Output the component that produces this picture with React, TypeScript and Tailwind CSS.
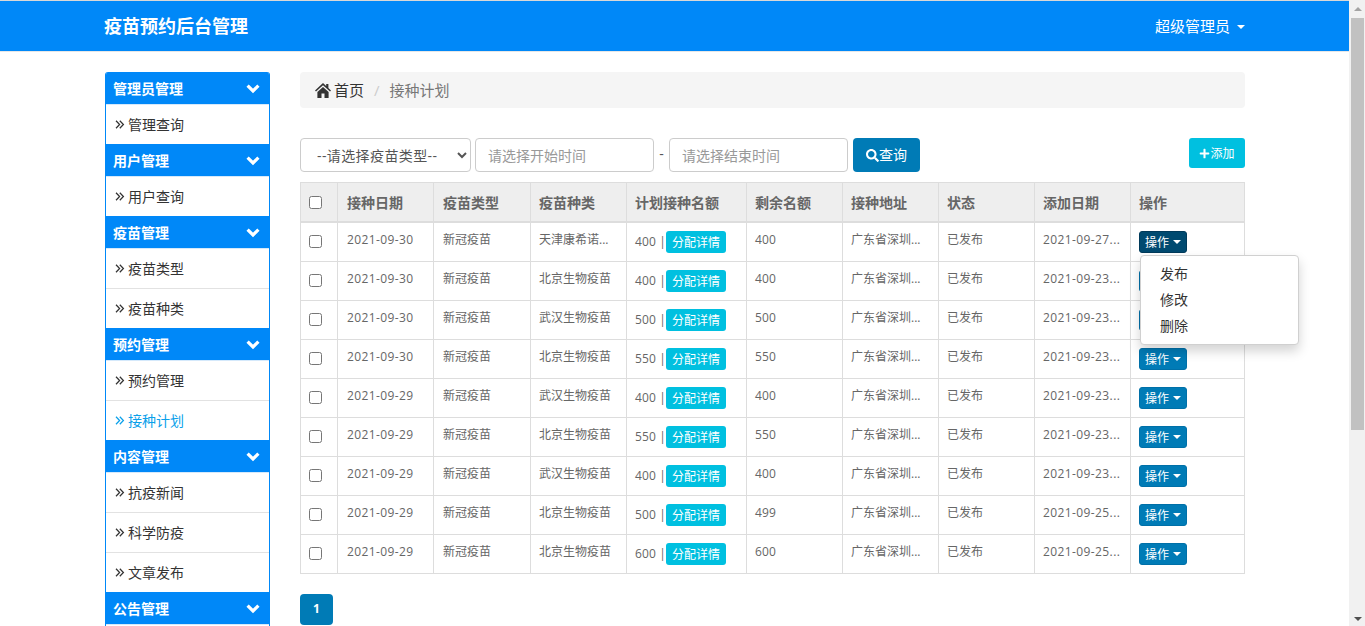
import React from "react";
import { FaSearch, FaPlus } from "react-icons/fa";

const menu = [
  { title: "管理员管理", items: ["管理查询"] },
  { title: "用户管理", items: ["用户查询"] },
  { title: "疫苗管理", items: ["疫苗类型", "疫苗种类"] },
  { title: "预约管理", items: ["预约管理", "接种计划"] },
  { title: "内容管理", items: ["抗疫新闻", "科学防疫", "文章发布"] },
  { title: "公告管理", items: [""] },
];

const rows = [
  ["2021-09-30", "天津康希诺...", "400", "400", "2021-09-27..."],
  ["2021-09-30", "北京生物疫苗", "400", "400", "2021-09-23..."],
  ["2021-09-30", "武汉生物疫苗", "500", "500", "2021-09-23..."],
  ["2021-09-30", "北京生物疫苗", "550", "550", "2021-09-23..."],
  ["2021-09-29", "武汉生物疫苗", "400", "400", "2021-09-23..."],
  ["2021-09-29", "北京生物疫苗", "550", "550", "2021-09-23..."],
  ["2021-09-29", "武汉生物疫苗", "400", "400", "2021-09-23..."],
  ["2021-09-29", "北京生物疫苗", "500", "499", "2021-09-25..."],
  ["2021-09-29", "北京生物疫苗", "600", "600", "2021-09-25..."],
];

const headers = ["接种日期", "疫苗类型", "疫苗种类", "计划接种名额", "剩余名额", "接种地址", "状态", "添加日期", "操作"];

function Caret() {
  return <span className="inline-block w-0 h-0 border-t-[4px] border-x-[4px] border-t-white border-x-transparent" />;
}

function Chevron() {
  return (
    <svg width="14" height="10" viewBox="0 0 14 10" className="shrink-0">
      <path d="M1.6 1.6 L7 7 L12.4 1.6" fill="none" stroke="white" strokeWidth="3.2" />
    </svg>
  );
}

function DoubleAngle() {
  return (
    <svg width="10" height="9" viewBox="0 0 10 9" className="mr-[3px] shrink-0">
      <path d="M1 .8 L4.6 4.5 L1 8.2 M4.8 .8 L8.4 4.5 L4.8 8.2" fill="none" stroke="currentColor" strokeWidth="1.25" />
    </svg>
  );
}

function Home() {
  return (
    <svg width="16" height="15" viewBox="0 0 16 15" className="mr-[3px] shrink-0" fill="#333">
      <path d="M8 0 L0 7.4 L1 8.6 L8 2.3 L15 8.6 L16 7.4 L13.4 5 V1 H11.2 V3 Z" />
      <path d="M2.4 9 L8 4 L13.6 9 V15 H9.5 V10.5 H6.5 V15 H2.4 Z" />
    </svg>
  );
}

function Sidebar() {
  return (
    <aside className="w-[165px] shrink-0 rounded-t-[3px] border-x border-[#0088f8] overflow-hidden">
      {menu.map((g) => (
        <div key={g.title}>
          <div className="h-8 bg-[#0088f8] flex items-center justify-between pl-[7px] pr-[9px] pt-px text-white font-bold text-sm">
            <span>{g.title}</span>
            <Chevron />
          </div>
          {g.items.map((it, i) => {
            const active = it === "接种计划";
            return (
              <div
                key={it + i}
                className={`h-10 flex items-center pl-[9px] text-sm border-t ${i > 0 ? "border-[#e2e2e2]" : "border-[#d5e9fb]"} ${active ? "text-[#0aa0ea]" : "text-[#333]"}`}
              >
                {it && <DoubleAngle />}
                <span>{it}</span>
              </div>
            );
          })}
        </div>
      ))}
    </aside>
  );
}

function Table() {
  const th = "border border-[#ddd] border-b-2 px-2 pt-[2px] text-left text-sm font-bold text-[#666] align-middle";
  const td = "border border-[#ddd] px-2 pt-2 pb-2 align-top text-xs text-[#666] leading-[17px]";
  return (
    <table className="w-[944px] table-fixed border-collapse">
      <colgroup>
        <col className="w-[37px]" />
        <col className="w-[96px]" />
        <col className="w-[97px]" />
        <col className="w-[96px]" />
        <col className="w-[120px]" />
        <col className="w-[96px]" />
        <col className="w-[96px]" />
        <col className="w-[96px]" />
        <col className="w-[96px]" />
        <col className="w-[114px]" />
      </colgroup>
      <thead>
        <tr className="h-[39px] bg-[#eee]">
          <th className={th}>
            <input type="checkbox" className="block w-[13px] h-[13px]" />
          </th>
          {headers.map((h, i) => (
            <th key={h} className={`${th} ${i < 2 ? "pl-[9px]" : ""}`}>{h}</th>
          ))}
        </tr>
      </thead>
      <tbody>
        {rows.map((r, i) => (
          <tr key={i}>
            <td className={td}>
              <input type="checkbox" className="block w-[13px] h-[13px] mt-[4px]" />
            </td>
            <td className={`${td} pl-[9px] tracking-[0.4px]`}>{r[0]}</td>
            <td className={`${td} pl-[9px]`}>新冠疫苗</td>
            <td className={td}>{r[1]}</td>
            <td className={td}>
              <div className="flex items-center h-[22px]">
                <span className="w-[31px] shrink-0 whitespace-nowrap tracking-[0.15px]">{r[2]} |</span>
                <span className="h-[22px] w-[60px] shrink-0 pt-[2px] rounded-[3px] bg-[#00c0e0] text-white flex items-center justify-center">分配详情</span>
              </div>
            </td>
            <td className={`${td} tracking-[0.15px]`}>{r[3]}</td>
            <td className={td}>广东省深圳...</td>
            <td className={td}>已发布</td>
            <td className={`${td} tracking-[0.4px]`}>{r[4]}</td>
            <td className={td}>
              <span className={`flex items-center justify-center gap-[4px] w-[48px] h-[22px] pt-px rounded-[3px] text-white border ${i === 0 ? "bg-[#004a70] border-[#003a5a]" : "bg-[#007bb6] border-[#0070a8]"}`}>
                操作 <Caret />
              </span>
            </td>
          </tr>
        ))}
      </tbody>
    </table>
  );
}

export default function App() {
  const ctl = "h-[34px] rounded border border-[#ccc] bg-white text-sm";
  return (
    <div className="flex h-[626px] overflow-hidden bg-white" style={{ fontFamily: '"Open Sans","Noto Sans CJK SC",sans-serif' }}>
      <div className="w-[1349px] shrink-0 flex flex-col">
        <header className="h-[52px] shrink-0 border-t border-t-[#d8d8d8] border-b border-b-[#e7e7e7] bg-[#0088f8] text-white">
          <div className="h-full pl-[104px] pr-[104px] flex items-center justify-between">
            <span className="text-[18px] font-bold">疫苗预约后台管理</span>
            <span className="text-[15px] flex items-center gap-[7px] pt-px">超级管理员 <span className="inline-block w-0 h-0 border-t-[4px] border-x-[4px] border-t-white border-x-transparent" /></span>
          </div>
        </header>
        <div className="flex-1 min-h-0 flex gap-[30px] pl-[105px] pr-[104px] pt-5 overflow-hidden">
          <Sidebar />
          <main className="w-[945px] shrink-0 relative">
            <nav className="h-9 rounded bg-[#f5f5f5] flex items-center pl-[15px] text-[15px] text-[#333]">
              <Home />
              <span>首页</span>
              <span className="mx-[10px] text-[#ccc]">/</span>
              <span className="text-[#777]">接种计划</span>
            </nav>
            <div className="mt-[30px] h-[44px] flex items-start">
              <select className={`${ctl} w-[171px] pl-3 text-[#555] tracking-[0.4px]`} defaultValue="">
                <option value="">--请选择疫苗类型--</option>
              </select>
              <input className={`${ctl} w-[179px] ml-[4px] px-3 placeholder:text-[#999]`} placeholder="请选择开始时间" />
              <span className="w-[15px] text-center text-sm text-[#555] leading-[32px]">-</span>
              <input className={`${ctl} w-[179px] px-3 placeholder:text-[#999]`} placeholder="请选择结束时间" />
              <button className="ml-[5px] w-[67px] h-[34px] rounded bg-[#007bb6] text-white text-sm flex items-center justify-center">
                <FaSearch className="text-[13px]" />查询
              </button>
              <button className="ml-auto w-[56px] h-[30px] pt-px rounded-[3px] bg-[#00c0e0] text-white text-xs flex items-center justify-center">
                <FaPlus className="text-[11px]" />添加
              </button>
            </div>
            <Table />
            <div className="mt-5 w-[33px] h-[31px] rounded bg-[#007bb6] text-white text-xs font-bold flex items-center justify-center">1</div>
            <div className="absolute left-[840px] top-[183px] w-[159px] h-[90px] rounded border border-[#d0d0d0] bg-white shadow-[0_6px_12px_rgba(0,0,0,0.175)] py-[5px] text-sm text-[#333]">
              <div className="h-[26px] pl-[19px] leading-[26px]">发布</div>
              <div className="h-[26px] pl-[19px] leading-[26px]">修改</div>
              <div className="h-[26px] pl-[19px] leading-[26px]">删除</div>
            </div>
          </main>
        </div>
      </div>
      <div className="w-4 shrink-0 bg-[#f1f1f1] flex flex-col pl-[2px] pr-px">
        <div className="h-[18px] flex items-center justify-center">
          <span className="w-0 h-0 border-b-[4px] border-x-[4px] border-b-[#a3a3a3] border-x-transparent" />
        </div>
        <div className="h-[412px] bg-[#c1c1c1]" />
        <div className="flex-1 flex items-end justify-center pb-[5px]">
          <span className="w-0 h-0 border-t-[4px] border-x-[4px] border-t-[#505050] border-x-transparent" />
        </div>
      </div>
    </div>
  );
}
